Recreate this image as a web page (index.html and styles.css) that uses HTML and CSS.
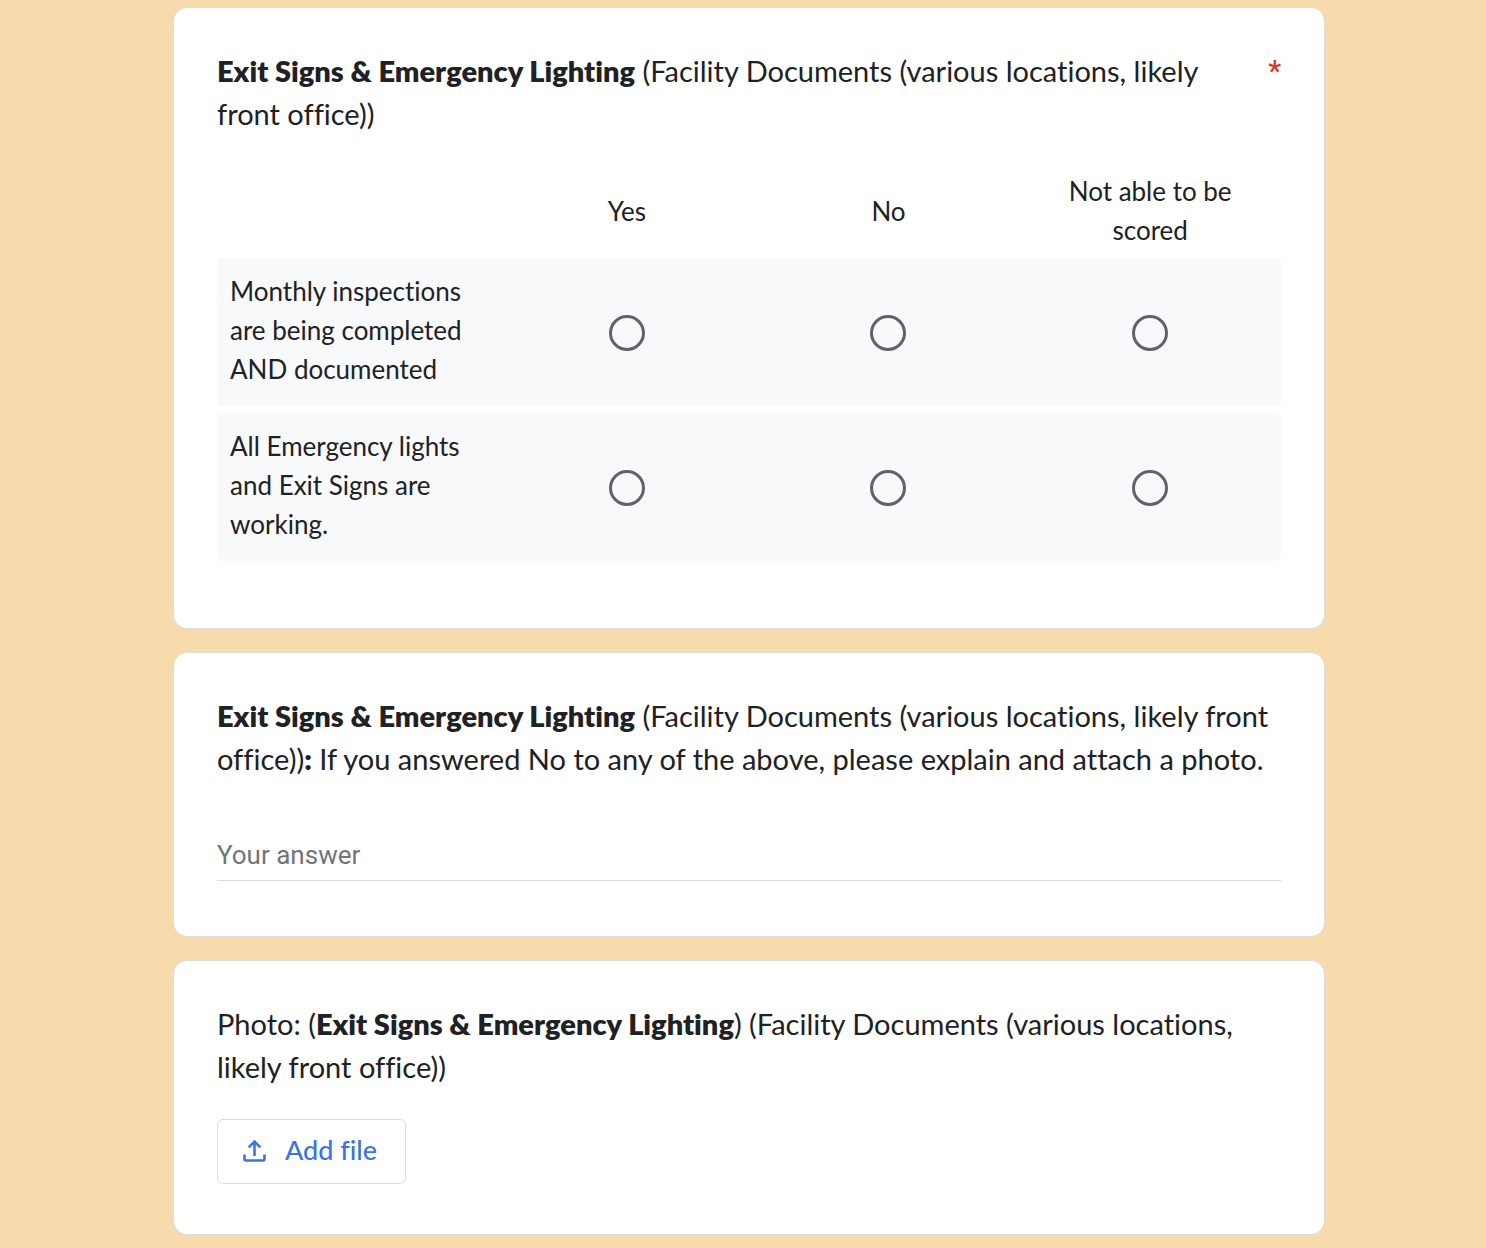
FILE: index.html
```html
<!DOCTYPE html>
<html lang="en">
<head>
<meta charset="utf-8">
<meta name="viewport" content="width=device-width, initial-scale=1">
<title>Facility inspection form</title>
<link rel="stylesheet" href="styles.css">
</head>
<body>
<form class="form">
  <section class="card card-grid">
    <div class="card-head">
      <h2 class="question" id="q1"><b>Exit Signs &amp; Emergency Lighting</b> (Facility Documents (various locations, likely front office))</h2>
      <span class="required" aria-label="Required question">*</span>
    </div>
    <table class="grid" aria-labelledby="q1">
      <colgroup><col class="col-label"><col><col><col></colgroup>
      <thead>
        <tr><td></td><th scope="col">Yes</th><th scope="col">No</th><th scope="col">Not able to be scored</th></tr>
      </thead>
      <tbody>
        <tr>
          <th scope="row">Monthly inspections are being completed AND documented</th>
          <td><input class="radio" type="radio" name="monthly" aria-label="Yes, monthly inspections"></td>
          <td><input class="radio" type="radio" name="monthly" aria-label="No, monthly inspections"></td>
          <td><input class="radio" type="radio" name="monthly" aria-label="Not able to be scored, monthly inspections"></td>
        </tr>
        <tr>
          <th scope="row">All Emergency lights and Exit Signs are working.</th>
          <td><input class="radio" type="radio" name="lights" aria-label="Yes, lights and signs"></td>
          <td><input class="radio" type="radio" name="lights" aria-label="No, lights and signs"></td>
          <td><input class="radio" type="radio" name="lights" aria-label="Not able to be scored, lights and signs"></td>
        </tr>
      </tbody>
    </table>
  </section>

  <section class="card card-text">
    <label class="question" for="explain"><b>Exit Signs &amp; Emergency Lighting</b> (Facility Documents (various locations, likely front office))<b>:</b> If you answered No to any of the above, please explain and attach a photo.</label>
    <input class="answer" id="explain" type="text" placeholder="Your answer">
  </section>

  <section class="card card-file">
    <h2 class="question">Photo: (<b>Exit Signs &amp; Emergency Lighting</b>) (Facility Documents (various locations, likely front office))</h2>
    <button class="add-file" type="button">
      <svg class="add-icon" viewBox="0 0 24 24" aria-hidden="true"><path d="M2.500 16.500v4.500q0 1.500 1.500 1.500h17q1.500 0 1.500-1.500V16.500M12.500 18V3.500M6.700 9.300l5.800-5.800 5.800 5.800" fill="none" stroke="currentColor" stroke-width="2.600"/></svg>
      <span>Add file</span>
    </button>
  </section>
</form>
</body>
</html>
```
FILE: styles.css
```css
* {
  box-sizing: border-box;
}

body {
  margin: 0;
  padding: 7px 0 13px 12px;
  background: #f8dbac;
  color: #202124;
  font-family: Lato, "Open Sans", sans-serif;
  font-variant-ligatures: none;
}

.form {
  display: flex;
  flex-direction: column;
  gap: 23px;
  max-width: 1152px;
  margin: 0 auto;
}

.card {
  padding: 41px 43px;
  background: #fff;
  border: 1px solid #dadce0;
  border-radius: 14px;
}

.card-grid {
  padding-bottom: 60px;
}

.card-text {
  padding-bottom: 55px;
}

.card-file {
  padding-bottom: 50px;
}

.card-head {
  display: flex;
  justify-content: space-between;
  gap: 56px;
}

.question {
  display: block;
  margin: 0;
  font-size: 29px;
  font-weight: 400;
  line-height: 43px;
}

.question b {
  font-weight: 800;
}

.required {
  color: #d13c2d;
  font-family: Roboto, sans-serif;
  font-size: 29px;
  font-weight: 500;
  line-height: 45px;
}

.grid {
  width: 100%;
  margin-top: 30px;
  table-layout: fixed;
  border-spacing: 0 7px;
  font-size: 26px;
  line-height: 39px;
}

.col-label {
  width: 279px;
}

.grid th {
  font-weight: 400;
}

.grid thead th {
  padding: 0 32px 1px;
}

.grid td {
  padding: 0;
  text-align: center;
  vertical-align: middle;
}

.grid tbody th,
.grid tbody td {
  background: #f8f9fb;
}

.grid tbody th {
  padding: 14px 13px 17px;
  border-radius: 4px 0 0 4px;
  text-align: left;
}

.grid tbody td:last-child {
  border-radius: 0 6px 6px 0;
}

.radio {
  display: block;
  width: 36px;
  height: 36px;
  margin: 2px auto 0;
  appearance: none;
  border: 3px solid #5f6368;
  border-radius: 50%;
}

.radio:checked {
  background: radial-gradient(#5f6368 8px, transparent 9px);
}

.answer {
  display: block;
  width: 100%;
  height: 50px;
  margin-top: 51px;
  padding: 0 0 2px;
  border: 0;
  border-bottom: 1px solid #dadce0;
  background: none;
  color: inherit;
  font: 26px Roboto, sans-serif;
}

.answer::placeholder {
  color: #70757a;
}

.add-file {
  display: flex;
  align-items: center;
  gap: 19px;
  height: 65px;
  margin-top: 31px;
  padding: 0 28px 4px 24px;
  border: 1px solid #dadce0;
  border-radius: 6px;
  background: #fff;
  color: #3b74e0;
  font: 500 27px Lato, sans-serif;
  font-variant-ligatures: none;
}

.add-icon {
  width: 24px;
  height: 24px;
}
```
